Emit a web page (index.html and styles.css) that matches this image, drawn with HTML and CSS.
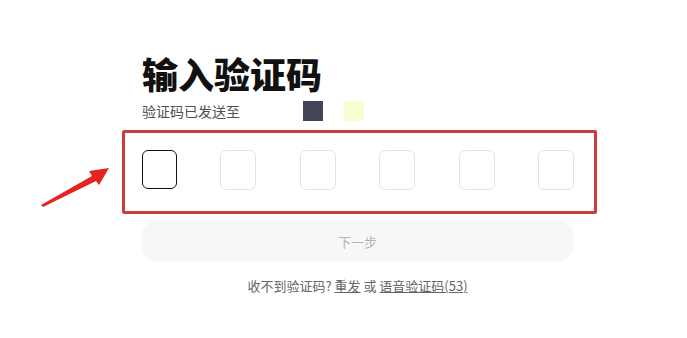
FILE: index.html
```html
<!DOCTYPE html>
<html lang="zh">
<head>
<meta charset="utf-8">
<link rel="stylesheet" href="styles.css">
</head>
<body>
<div class="page">
  <h1 class="title">输入验证码</h1>
  <div class="sent-row">
    <span class="sent-text">验证码已发送至</span>
    <span class="mask mask-dark"></span>
    <span class="mask mask-yellow"></span>
  </div>
  <div class="highlight">
    <div class="codes">
      <div class="code active"></div>
      <div class="code"></div>
      <div class="code"></div>
      <div class="code"></div>
      <div class="code"></div>
      <div class="code"></div>
    </div>
  </div>
  <button class="next">下一步</button>
  <p class="hint">收不到验证码? <a class="link">重发</a> 或 <a class="link">语音验证码(53)</a></p>
</div>
<svg class="arrow" width="80" height="50" viewBox="0 0 80 50">
  <path d="M5 44 L56 15 L53 10 L73 7 L63 24 L60 20 L7 46 Z" fill="#e5231f"/>
</svg>
</body>
</html>
```
FILE: styles.css
```css
html, body {
  margin: 0;
  padding: 0;
  background: #ffffff;
}
body {
  font-family: "Noto Sans CJK SC", "Noto Sans", sans-serif;
  width: 687px;
  height: 338px;
  position: relative;
  overflow: hidden;
}
.page {
  padding: 52px 0 0 142px;
  width: 431px;
}
.title {
  margin: 0;
  font-size: 36px;
  line-height: 42px;
  font-weight: 900;
  color: #111;
}
.sent-row {
  display: flex;
  align-items: center;
  height: 22px;
  margin-top: 6px;
}
.sent-text {
  font-size: 14px;
  color: #505050;
  width: 161px;
}
.mask {
  display: inline-block;
  width: 20px;
  height: 20px;
}
.mask-dark {
  background: #444457;
  margin-right: 21px;
}
.mask-yellow {
  background: #f5ffd4;
}
.highlight {
  margin-left: -20px;
  margin-top: 8px;
  border: 3px solid #cf3a3a;
  border-radius: 2px;
  padding: 17px 0 0 17px;
  height: 61px;
  width: 452px;
}
.codes {
  display: flex;
  gap: 43.4px;
}
.code {
  width: 34px;
  height: 38px;
  border: 1px solid #e4e4e6;
  border-radius: 6px;
}
.code.active {
  border: 1.5px solid #111;
  width: 33px;
  height: 37px;
}
.next {
  display: block;
  margin-top: 7px;
  width: 431px;
  height: 40px;
  border: none;
  border-radius: 14px;
  background: #f7f7f8;
  color: #b4b4b4;
  font-family: inherit;
  font-size: 13px;
}
.hint {
  margin: 16px 0 0;
  text-align: center;
  font-size: 13px;
  line-height: 18px;
  color: #666;
}
.link {
  color: #666;
  text-decoration: underline;
}
.arrow {
  position: absolute;
  left: 36px;
  top: 161px;
}
```
